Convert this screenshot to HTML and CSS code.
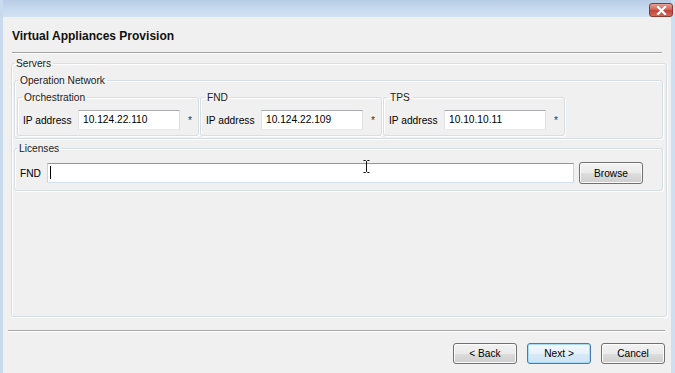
FILE: index.html
```html
<!DOCTYPE html>
<html lang="en">
<head>
  <meta charset="UTF-8" />
  <title>Virtual Appliances Provision</title>
  <link rel="stylesheet" href="styles.css">
</head>
<body>
  <div class="window">
    <div class="titlebar">
      <span class="close">
        <svg width="11" height="9" viewBox="0 0 11 9"><path d="M2 1 L9 8 M9 1 L2 8" stroke="#fff" stroke-width="2.2" stroke-linecap="square"/></svg>
      </span>
    </div>

    <div class="frame">
      <h1 class="heading">Virtual Appliances Provision</h1>
      <div class="rule"></div>

      <fieldset class="group servers">
        <legend>Servers</legend>

        <fieldset class="group network">
          <legend>Operation Network</legend>
          <div class="nodes">
            <fieldset class="group node">
              <legend>Orchestration</legend>
              <div class="field">
                <span class="label">IP address</span>
                <div class="textbox">10.124.22.110</div>
                <span class="req">*</span>
              </div>
            </fieldset>
            <fieldset class="group node">
              <legend>FND</legend>
              <div class="field">
                <span class="label">IP address</span>
                <div class="textbox">10.124.22.109</div>
                <span class="req">*</span>
              </div>
            </fieldset>
            <fieldset class="group node">
              <legend>TPS</legend>
              <div class="field">
                <span class="label">IP address</span>
                <div class="textbox">10.10.10.11</div>
                <span class="req">*</span>
              </div>
            </fieldset>
          </div>
        </fieldset>

        <fieldset class="group licenses">
          <legend>Licenses</legend>
          <div class="field license-row">
            <span class="label short">FND</span>
            <div class="textbox wide focused"><span class="caret"></span></div>
            <button class="btn">Browse</button>
          </div>
        </fieldset>
      </fieldset>

      <div class="rule bottom"></div>

      <div class="actions">
        <button class="btn">&lt; Back</button>
        <button class="btn default">Next &gt;</button>
        <button class="btn">Cancel</button>
      </div>
    </div>

    <!-- mouse pointer over the license box -->
    <svg class="ibeam" width="7" height="13" viewBox="0 0 7 13">
      <path d="M0.5 0.5 H2.5 L3.5 1.5 L4.5 0.5 H6.5 M3.5 1.5 V11.5 M0.5 12.5 H2.5 L3.5 11.5 L4.5 12.5 H6.5" stroke="#111" stroke-width="1" fill="none"/>
    </svg>
  </div>
</body>
</html>
```

FILE: styles.css
```css
/* Base */
html, body {
  margin: 0;
  padding: 0;
  height: 100%;
  overflow: hidden;
  background: #f0f0f0;
  font-family: "Liberation Sans", Arial, sans-serif;
  font-size: 10.2px;
  color: #000;
}

.window {
  position: relative;
  height: 373px;
  display: flex;
  flex-direction: column;
  border-left: 3px solid #c8daee;
  border-right: 4px solid #cddff1;
  background: #f0f0f0;
}

/* Title bar */
.titlebar {
  height: 17px;
  flex: none;
  background: linear-gradient(#b7cce5, #c9dbef 60%, #d3e2f2);
  display: flex;
  justify-content: flex-end;
  align-items: flex-start;
}

.close {
  width: 22px;
  height: 12px;
  margin-top: 3px;
  margin-right: -2px;
  border: 1px solid #8b3a32;
  border-radius: 3px;
  background: linear-gradient(#e6a195, #d0675a 45%, #c2443a 55%, #d26a55);
  display: flex;
  align-items: center;
  justify-content: center;
}

/* Content frame */
.frame {
  flex: 1;
  display: flex;
  flex-direction: column;
  min-height: 0;
  padding-bottom: 9px;
}

.heading {
  margin: 12px 0 0 9px;
  font-size: 12px;
  line-height: 14px;
  font-weight: bold;
  color: #111;
}

.rule {
  height: 0;
  margin: 9px 9px 0 9px;
  border-top: 1px solid #a3a3a3;
  border-bottom: 1px solid #fff;
}

.rule.bottom {
  margin: 13px 6px 0 5px;
  border-top-color: #a8a8a8;
}

/* Group boxes */
.group {
  margin: 0;
  padding: 4px 3px 0 2px;
  border: 1px solid #d5dfe5;
  border-radius: 3px;
  box-shadow: inset 1px 1px 0 #fff, 1px 1px 0 #fff;
  min-width: 0;
}

.group legend {
  padding: 0 2px;
  line-height: 13px;
  color: #222;
}

.servers {
  margin: 3px 4px 0 8px;
  flex: 1;
  min-height: 0;
}

.network {
  padding-bottom: 2px;
}

.network legend {
  margin-left: 1px;
}

.nodes {
  display: flex;
  gap: 1px;
}

.node {
  width: 182px;
  box-sizing: border-box;
  padding: 6px 0 5px 3px;
}

.field {
  display: flex;
  align-items: center;
  padding-left: 2px;
  height: 20px;
}

.label {
  width: 55px;
  flex: none;
}

.label.short {
  width: 27px;
}

.textbox {
  position: relative;
  width: 102px;
  height: 20px;
  box-sizing: border-box;
  padding: 0 4px;
  background: #fff;
  border: 1px solid;
  border-color: #abadb3 #dbdfe6 #e3e9ef #e2e3ea;
  line-height: 18px;
  white-space: nowrap;
}

.req {
  margin-left: 8px;
  color: #333;
}

/* Licenses */
.licenses {
  margin-top: 3px;
  padding: 7px 3px 6px 2px;
}

.license-row {
  height: 22px;
  padding-left: 3px;
}

.textbox.wide {
  width: 527px;
}

.textbox.focused {
  border-color: #7f9db9 #c5d5e4 #d5e1ec #c5d5e4;
}

.caret {
  position: absolute;
  left: 2px;
  top: 2px;
  width: 1px;
  height: 13px;
  background: #000;
}

.ibeam {
  position: absolute;
  left: 360px;
  top: 160px;
}

/* Buttons */
.btn {
  width: 64px;
  height: 21px;
  box-sizing: border-box;
  margin-left: 5px;
  padding: 0;
  font-family: "Liberation Sans", Arial, sans-serif;
  font-size: 10.2px;
  color: #000;
  border: 1px solid #707070;
  border-radius: 3px;
  background: linear-gradient(#f2f2f2, #ebebeb 50%, #dddddd 51%, #cfcfcf);
  box-shadow: inset 0 0 0 1px #fbfbfb;
}

.license-row .btn {
  height: 22px;
}

.btn.default {
  border-color: #3c7fb1;
  background: linear-gradient(#f3f9fd, #e6f1fa 50%, #d9eaf7 51%, #cde3f4);
  box-shadow: inset 0 0 0 1px #aadbf6;
}

.actions {
  display: flex;
  justify-content: flex-end;
  gap: 5px;
  margin-top: 11px;
  padding-right: 6px;
}
```
